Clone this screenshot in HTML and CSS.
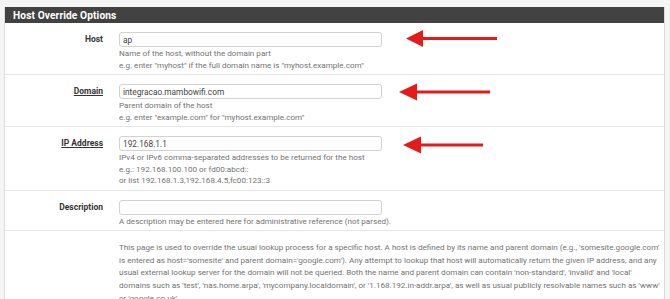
FILE: index.html
```html
<!DOCTYPE html>
<html lang="en">

<head>
	<meta charset="UTF-8">
	<title>Host Override</title>
	<link rel="stylesheet" href="styles.css">
</head>

<body>
	<div class="panel">
		<div class="panel-heading">
			<h2>Host Override Options</h2>
		</div>
		<div class="panel-body">
			<div class="form-row">
				<label class="col-label">Host</label>
				<div class="col-field">
					<input type="text" value="ap">
					<span class="help">Name of the host, without the domain part<br>e.g. enter "myhost" if the full domain name is "myhost.example.com"</span>
				</div>
			</div>
			<div class="form-row">
				<label class="col-label under">Domain</label>
				<div class="col-field">
					<input type="text" value="integracao.mambowifi.com">
					<span class="help">Parent domain of the host<br>e.g. enter "example.com" for "myhost.example.com"</span>
				</div>
			</div>
			<div class="form-row">
				<label class="col-label under">IP Address</label>
				<div class="col-field">
					<input type="text" value="192.168.1.1">
					<span class="help">IPv4 or IPv6 comma-separated addresses to be returned for the host<br>e.g.: 192.168.100.100 or fd00:abcd::<br>or list 192.168.1.3,192.168.4.5,fc00:123::3</span>
				</div>
			</div>
			<div class="form-row">
				<label class="col-label">Description</label>
				<div class="col-field">
					<input type="text" value="">
					<span class="help">A description may be entered here for administrative reference (not parsed).</span>
				</div>
			</div>
			<div class="form-row last">
				<div class="col-label"></div>
				<div class="col-field">
					<span class="help info">This page is used to override the usual lookup process for a specific host. A host is defined by its name and parent domain (e.g., 'somesite.google.com'<br>is entered as host='somesite' and parent domain='google.com'). Any attempt to lookup that host will automatically return the given IP address, and any<br>usual external lookup server for the domain will not be queried. Both the name and parent domain can contain 'non-standard', 'invalid' and 'local'<br>domains such as 'test', 'nas.home.arpa', 'mycompany.localdomain', or '1.168.192.in-addr.arpa', as well as usual publicly resolvable names such as 'www'<br>or 'google.co.uk'.</span>
				</div>
			</div>
		</div>
	</div>

	<!-- red arrows drawn over the form -->
	<svg class="arrows" width="670" height="299" viewBox="0 0 670 299">
		<g fill="#e31b1b" stroke="#e31b1b">
			<line x1="420" y1="38.5" x2="497" y2="38.5" stroke-width="3" />
			<polygon points="406,38.5 423,30 423,47" stroke-width="0" />
			<line x1="414" y1="92" x2="490" y2="92" stroke-width="3" />
			<polygon points="399,92 417,83.5 417,100.5" stroke-width="0" />
			<line x1="418" y1="145" x2="483" y2="145" stroke-width="3" />
			<polygon points="403,145 421,136.5 421,153.5" stroke-width="0" />
		</g>
	</svg>
</body>

</html>
```

FILE: styles.css
```css
body {
	margin: 0;
	background-color: #f5f5f5;
	font-family: Roboto, 'Liberation Sans', Arial, sans-serif;
	color: #333;
}

.panel {
	margin: 7px 5px 0 4px;
	background-color: #fff;
	border: 1px solid #dcdcdc;
	border-top: 0;
	border-bottom: 0;
}

.panel-heading {
	height: 16px;
	background-color: #424242;
	padding: 0 8px;
	display: flex;
	align-items: center;
}

.panel-heading h2 {
	margin: 0;
	font-size: 10.2px;
	font-weight: 700;
	color: #fff;
	letter-spacing: 0.1px;
}

.form-row {
	display: flex;
	padding: 9px 0 3px 0;
	border-bottom: 1px solid #e6e6e6;
}

.form-row.last {
	border-bottom: 0;
}

.col-label {
	width: 98px;
	flex: none;
	text-align: right;
	font-size: 8.5px;
	font-weight: 700;
	line-height: 15px;
	color: #333;
}

.col-label.under {
	text-decoration: underline;
}

.col-field {
	margin-left: 16px;
	flex: 1;
	display: flex;
	flex-direction: column;
	align-items: flex-start;
}

input {
	box-sizing: border-box;
	width: 263px;
	height: 15px;
	margin: 0;
	padding: 0 3px;
	border: 1px solid #d2d2d2;
	border-radius: 3px;
	font-family: Roboto, 'Liberation Sans', Arial, sans-serif;
	font-size: 8.3px;
	color: #444;
	outline: none;
}

.help {
	margin-top: 1px;
	font-size: 8.1px;
	line-height: 11.5px;
	color: #737373;
	white-space: nowrap;
}

.help.info {
	margin-top: 1px;
	line-height: 12.7px;
}

.arrows {
	position: absolute;
	left: 0;
	top: 0;
	pointer-events: none;
}
```
